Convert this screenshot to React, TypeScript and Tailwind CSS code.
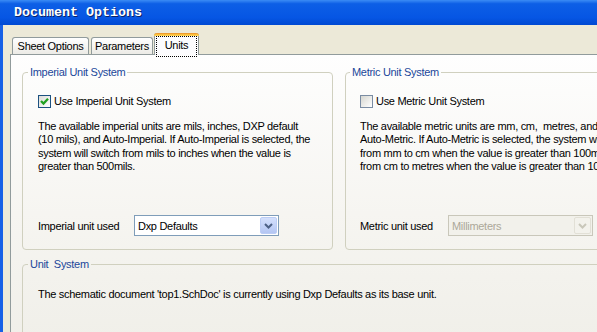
import React from "react";

function Chevron({ color }: { color: string }) {
  return (
    <svg width="9" height="6" viewBox="0 0 9 6">
      <path d="M1 1 L4.5 4.5 L8 1" fill="none" stroke={color} strokeWidth="2" />
    </svg>
  );
}

function CheckBox({ checked }: { checked: boolean }) {
  return (
    <div
      className={
        checked
          ? "w-[13px] h-[13px] shrink-0 border border-[#1C5180] bg-[linear-gradient(135deg,#DCDCD7,#FFFFFF)] flex items-center justify-center"
          : "w-[13px] h-[13px] shrink-0 border border-[#7A8CA3] bg-[linear-gradient(135deg,#D6D6D0,#FFFFFF)]"
      }
    >
      {checked && (
        <svg width="11" height="11" viewBox="0 0 11 11">
          <polyline points="2,5 4.5,7.5 9,2.8" fill="none" stroke="#21A121" strokeWidth="2.3" />
        </svg>
      )}
    </div>
  );
}

function Combo({ text, disabled }: { text: string; disabled?: boolean }) {
  return (
    <div
      className={
        disabled
          ? "w-[145px] h-[21px] border border-[#C9C7BA] bg-[#F2F1EB] flex items-center pl-[3px] pr-[1px] text-[#ACA899]"
          : "w-[145px] h-[21px] border border-[#7F9DB9] bg-white flex items-center pl-[3px] pr-[1px]"
      }
    >
      <span className="flex-1">{text}</span>
      <div
        className={
          disabled
            ? "w-[17px] h-[17px] rounded-[2px] border border-[#E2E0D6] bg-[#F3F2EC] flex items-center justify-center"
            : "w-[17px] h-[17px] rounded-[2px] border border-[#BCCDF5] bg-[linear-gradient(180deg,#D4E0FC,#B4C6F3)] flex items-center justify-center"
        }
      >
        <Chevron color={disabled ? "#C9C7BA" : "#4D6185"} />
      </div>
    </div>
  );
}

export default function App() {
  return (
    <div className="w-[597px] h-[332px] overflow-hidden flex flex-col font-['Liberation_Sans',Arial,sans-serif] text-[11px] tracking-[-0.3px] text-black">
      {/* title bar */}
      <div className="h-[25px] shrink-0 flex items-center pl-[14px] bg-[linear-gradient(180deg,#3B8CF5_0%,#0D5FE6_15%,#0656E4_70%,#0049D2_100%)]">
        <span className="font-['Liberation_Mono',monospace] font-bold text-[13.33px] tracking-normal text-white [text-shadow:1px_1px_0_#0A246A]">
          Document Options
        </span>
      </div>

      {/* body */}
      <div className="flex-1 min-h-0 flex flex-col bg-[#ECE9D8] border-l-[3px] border-[#1660E6] pl-[7px] pt-[8px] overflow-hidden">
        {/* tabs */}
        <div className="flex items-end pl-[2px] shrink-0 relative z-10">
          <div className="w-[77px] h-[17px] border border-b-0 border-[#919B9C] rounded-t-[3px] bg-[linear-gradient(180deg,#FFFFFF,#ECEBE6)] flex items-center justify-center">
            Sheet Options
          </div>
          <div className="ml-[2px] w-[62px] h-[17px] border border-b-0 border-[#919B9C] rounded-t-[3px] bg-[linear-gradient(180deg,#FFFFFF,#ECEBE6)] flex items-center justify-center">
            Parameters
          </div>
          <div className="ml-[1px] -mb-px w-[45px] h-[22px] border-x border-[#919B9C] rounded-t-[3px] bg-[#FCFCFE] flex flex-col">
            <div className="h-[3px] shrink-0 -mx-px rounded-t-[3px] bg-[linear-gradient(180deg,#E68B2C,#FFC73C_60%,#FFD764)]" />
            <div className="flex-1 mx-[1px] mb-[2px] border border-dotted border-black flex items-center justify-center pb-[2px]">
              Units
            </div>
          </div>
        </div>

        {/* tab panel */}
        <div className="w-[658px] shrink-0 flex-1 border border-[#919B9C] bg-[linear-gradient(180deg,#FEFEFE_0%,#F6F5F1_55%,#F0EFE9_100%)] px-[11px] pt-[11px]">
          <div className="flex gap-[12px] items-start">
            {/* Imperial */}
            <fieldset className="w-[311px] border border-[#D0D0BF] rounded-[4px] pl-[15px] pb-[13px]">
              <legend className="-ml-[10px] px-[2px] leading-[13px] text-[#21479A]">Imperial Unit System</legend>
              <div className="mt-[16px] flex items-center h-[13px] gap-[3px]">
                <CheckBox checked />
                <span>Use Imperial Unit System</span>
              </div>
              <p className="mt-[12px] leading-[13.33px] whitespace-pre">
                {"The available imperial units are mils, inches, DXP default\n(10 mils), and Auto-Imperial. If Auto-Imperial is selected, the\nsystem will switch from mils to inches when the value is\ngreater than 500mils."}
              </p>
              <div className="mt-[42px] flex items-center h-[21px]">
                <span className="w-[96px] shrink-0">Imperial unit used</span>
                <Combo text="Dxp Defaults" />
              </div>
            </fieldset>

            {/* Metric */}
            <fieldset className="w-[311px] border border-[#D0D0BF] rounded-[4px] pl-[14px] pb-[13px] overflow-hidden">
              <legend className="-ml-[10px] px-[2px] leading-[13px] text-[#21479A]">Metric Unit System</legend>
              <div className="mt-[16px] flex items-center h-[13px] gap-[3px]">
                <CheckBox checked={false} />
                <span>Use Metric Unit System</span>
              </div>
              <p className="mt-[12px] leading-[13.33px] whitespace-pre">
                {"The available metric units are mm, cm,  metres, and\nAuto-Metric. If Auto-Metric is selected, the system will switch\nfrom mm to cm when the value is greater than 100mm and\nfrom cm to metres when the value is greater than 100cm."}
              </p>
              <div className="mt-[42px] flex items-center h-[21px]">
                <span className="w-[88px] shrink-0">Metric unit used</span>
                <Combo text="Millimeters" disabled />
              </div>
            </fieldset>
          </div>

          {/* Unit System */}
          <fieldset className="mt-[8px] border border-[#D0D0BF] rounded-[4px] pl-[15px] pb-[40px]">
            <legend className="-ml-[10px] px-[2px] leading-[13px] text-[#21479A] whitespace-pre">{"Unit  System"}</legend>
            <p className="mt-[17px] leading-[13px]">
              The schematic document 'top1.SchDoc' is currently using Dxp Defaults as its base unit.
            </p>
          </fieldset>
        </div>
      </div>
    </div>
  );
}
